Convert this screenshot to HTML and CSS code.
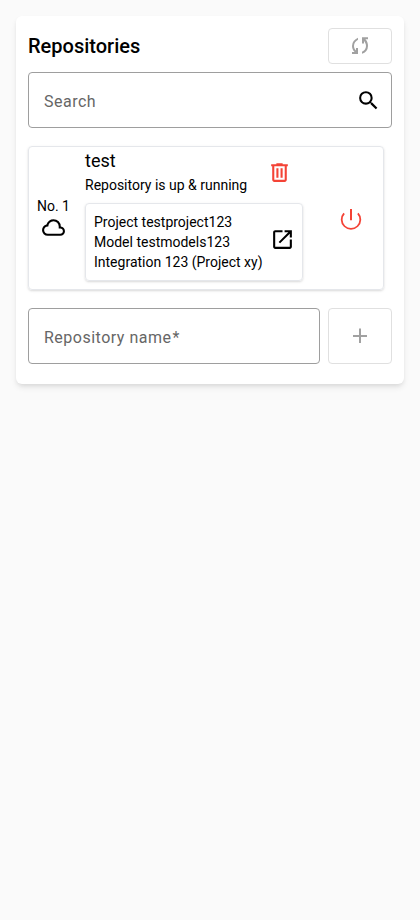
FILE: index.html
```html
<!DOCTYPE html>
<html lang="en">
<head>
<meta charset="utf-8">
<title>Repositories</title>
<link rel="stylesheet" href="styles.css">
</head>
<body>
<main class="card">
  <header class="header">
    <h1 class="title">Repositories</h1>
    <button class="button refresh" disabled aria-label="Refresh">
      <svg class="icon" viewBox="0 0 24 24"><path d="M4 20v-2h2.75l-.4-.35q-1.225-1.225-1.787-2.662T4 12.05q0-2.775 1.663-4.937T10 3.7v2.1Q8.2 6.8 7.1 8.363T6 12.05q0 1.125.425 2.188T7.75 16.2l.25.25V14h2v6H4Zm10-.25v-2.1q1.8-.65 2.9-2.213T18 11.95q0-1.125-.425-2.187T16.25 7.3L16 7.05V9.5h-2V3.2h6v2h-2.75l.4.35q1.225 1.225 1.788 2.963T20 11.95q0 2.775-1.663 4.938T14 19.75Z"/></svg>
    </button>
  </header>
  <label class="field search">
    <span>Search</span>
    <svg class="icon" viewBox="0 0 24 24"><path d="M15.5 14h-.79l-.28-.27A6.471 6.471 0 0 0 16 9.5 6.5 6.5 0 1 0 9.5 16c1.61 0 3.09-.59 4.23-1.57l.27.28v.79l5 4.99L20.49 19l-4.99-5zm-6 0C7.01 14 5 11.99 5 9.5S7.01 5 9.5 5 14 7.01 14 9.5 11.99 14 9.5 14z"/></svg>
  </label>
  <section class="repo">
    <div class="number">
      <span>No. 1</span>
      <svg class="icon" viewBox="0 0 24 24"><path d="M6.5 20q-2.275 0-3.888-1.575T1 14.575q0-1.95 1.175-3.475T5.25 9.15q.625-2.3 2.5-3.725T12 4q2.925 0 4.963 2.037T19 11q1.725.2 2.863 1.487T23 15.5q0 1.875-1.313 3.187T18.5 20h-12Zm0-2h12q1.05 0 1.775-.725T21 15.5q0-1.05-.725-1.775T18.5 13H17v-2q0-2.075-1.463-3.538T12 6Q9.925 6 8.462 7.462T7 11h-.5q-1.45 0-2.475 1.025T3 14.5q0 1.45 1.025 2.475T6.5 18Z"/></svg>
    </div>
    <div class="body">
      <div class="summary">
        <div>
          <h2 class="name">test</h2>
          <p class="status">Repository is up &amp; running</p>
        </div>
        <svg class="icon red trash" viewBox="0 0 24 24"><path d="M7 21q-.825 0-1.413-.588T5 19V6H4V4h5V3h6v1h5v2h-1v13q0 .825-.588 1.413T17 21H7ZM17 6H7v13h10V6ZM9 17h2V8H9v9Zm4 0h2V8h-2v9Z"/></svg>
      </div>
      <div class="integration">
        <p>Project testproject123<br>Model testmodels123<br>Integration 123 (Project xy)</p>
        <svg class="icon" viewBox="0 0 24 24"><path d="M5 21q-.825 0-1.413-.588T3 19V5q0-.825.588-1.413T5 3h7v2H5v14h14v-7h2v7q0 .825-.588 1.413T19 21H5Zm4.7-5.3-1.4-1.4L17.6 5H14V3h7v7h-2V6.4l-9.3 9.3Z"/></svg>
      </div>
    </div>
    <div class="power">
      <svg class="icon red" viewBox="0 0 24 24"><path d="M11 1h2v11.3h-2zM4.4 4.7 5.8 6A8.4 8.4 0 1 0 18.2 6l1.4-1.3A10.2 10.2 0 1 1 4.4 4.7Z"/></svg>
    </div>
  </section>
  <footer class="footer">
    <label class="field">Repository name<span class="required">*</span></label>
    <button class="button add" disabled aria-label="Add">
      <svg class="icon" viewBox="0 0 24 24"><path d="M11 19v-6H5v-2h6V4.5h2V11h6v2h-6v6Z"/></svg>
    </button>
  </footer>
</main>
</body>
</html>
```
FILE: styles.css
```css
* { box-sizing: border-box; }
body {
  margin: 0;
  padding: 16px;
  background: #fafafa;
  color: #000;
  font: 14px/20px Roboto, sans-serif;
}
h1, h2, p { margin: 0; }
.card {
  height: 368px;
  padding: 12px;
  border-radius: 6px;
  background: #fff;
  box-shadow: 0 4px 6px -1px rgba(0,0,0,.1), 0 2px 4px -1px rgba(0,0,0,.06);
}
.icon { display: block; width: 25px; height: 25px; flex: none; fill: currentColor; }
.red { color: #f44336; }
.header { display: flex; justify-content: space-between; align-items: center; height: 36px; }
.title { font-size: 20px; line-height: 32px; font-weight: 500; }
.button {
  display: flex;
  align-items: center;
  justify-content: center;
  width: 64px;
  padding: 0;
  border: 1px solid #e0e0e0;
  border-radius: 4px;
  background: #fff;
  color: #a1a1a1;
}
.button .icon { width: 24px; height: 24px; }
.refresh { height: 36px; }
.add { height: 56px; }
.field {
  display: flex;
  flex: 1;
  align-items: center;
  height: 56px;
  padding: 4px 15px 0;
  border: 1px solid #9e9e9e;
  border-radius: 4px;
  color: #666;
  font-size: 16px;
  letter-spacing: .5px;
}
.required { margin-left: 1px; }
.search { justify-content: space-between; margin-top: 8px; padding-right: 10px; }
.search .icon { color: #000; margin-top: -4px; }
.repo {
  display: flex;
  width: 356px;
  height: 144px;
  margin-top: 18px;
  border: 1px solid #e5e7eb;
  border-radius: 4px;
  box-shadow: 0 1px 3px rgba(0,0,0,.1), 0 1px 2px rgba(0,0,0,.06);
}
.number {
  display: flex;
  flex-direction: column;
  align-items: center;
  justify-content: center;
  width: 49px;
}
.number .icon { margin-top: -1px; }
.body { width: 218px; margin-left: 7px; }
.summary { display: flex; justify-content: space-between; height: 56px; }
.name { font-size: 18px; line-height: 28px; font-weight: 400; }
.status { line-height: 20px; }
.trash { margin: 13px 11px 0 0; }
.integration {
  display: flex;
  align-items: center;
  justify-content: space-between;
  height: 78px;
  padding: 0 7px 0 8px;
  border: 1px solid #e5e7eb;
  border-radius: 4px;
  box-shadow: 0 1px 3px rgba(0,0,0,.1), 0 1px 2px rgba(0,0,0,.06);
  white-space: nowrap;
}
.integration .icon { margin-bottom: 5px; }
.power { display: flex; flex: 1; align-items: center; justify-content: center; padding: 4px 0 0 16px; }
.power .icon { width: 24px; height: 24px; }
.footer { display: flex; gap: 8px; margin-top: 18px; }
```
